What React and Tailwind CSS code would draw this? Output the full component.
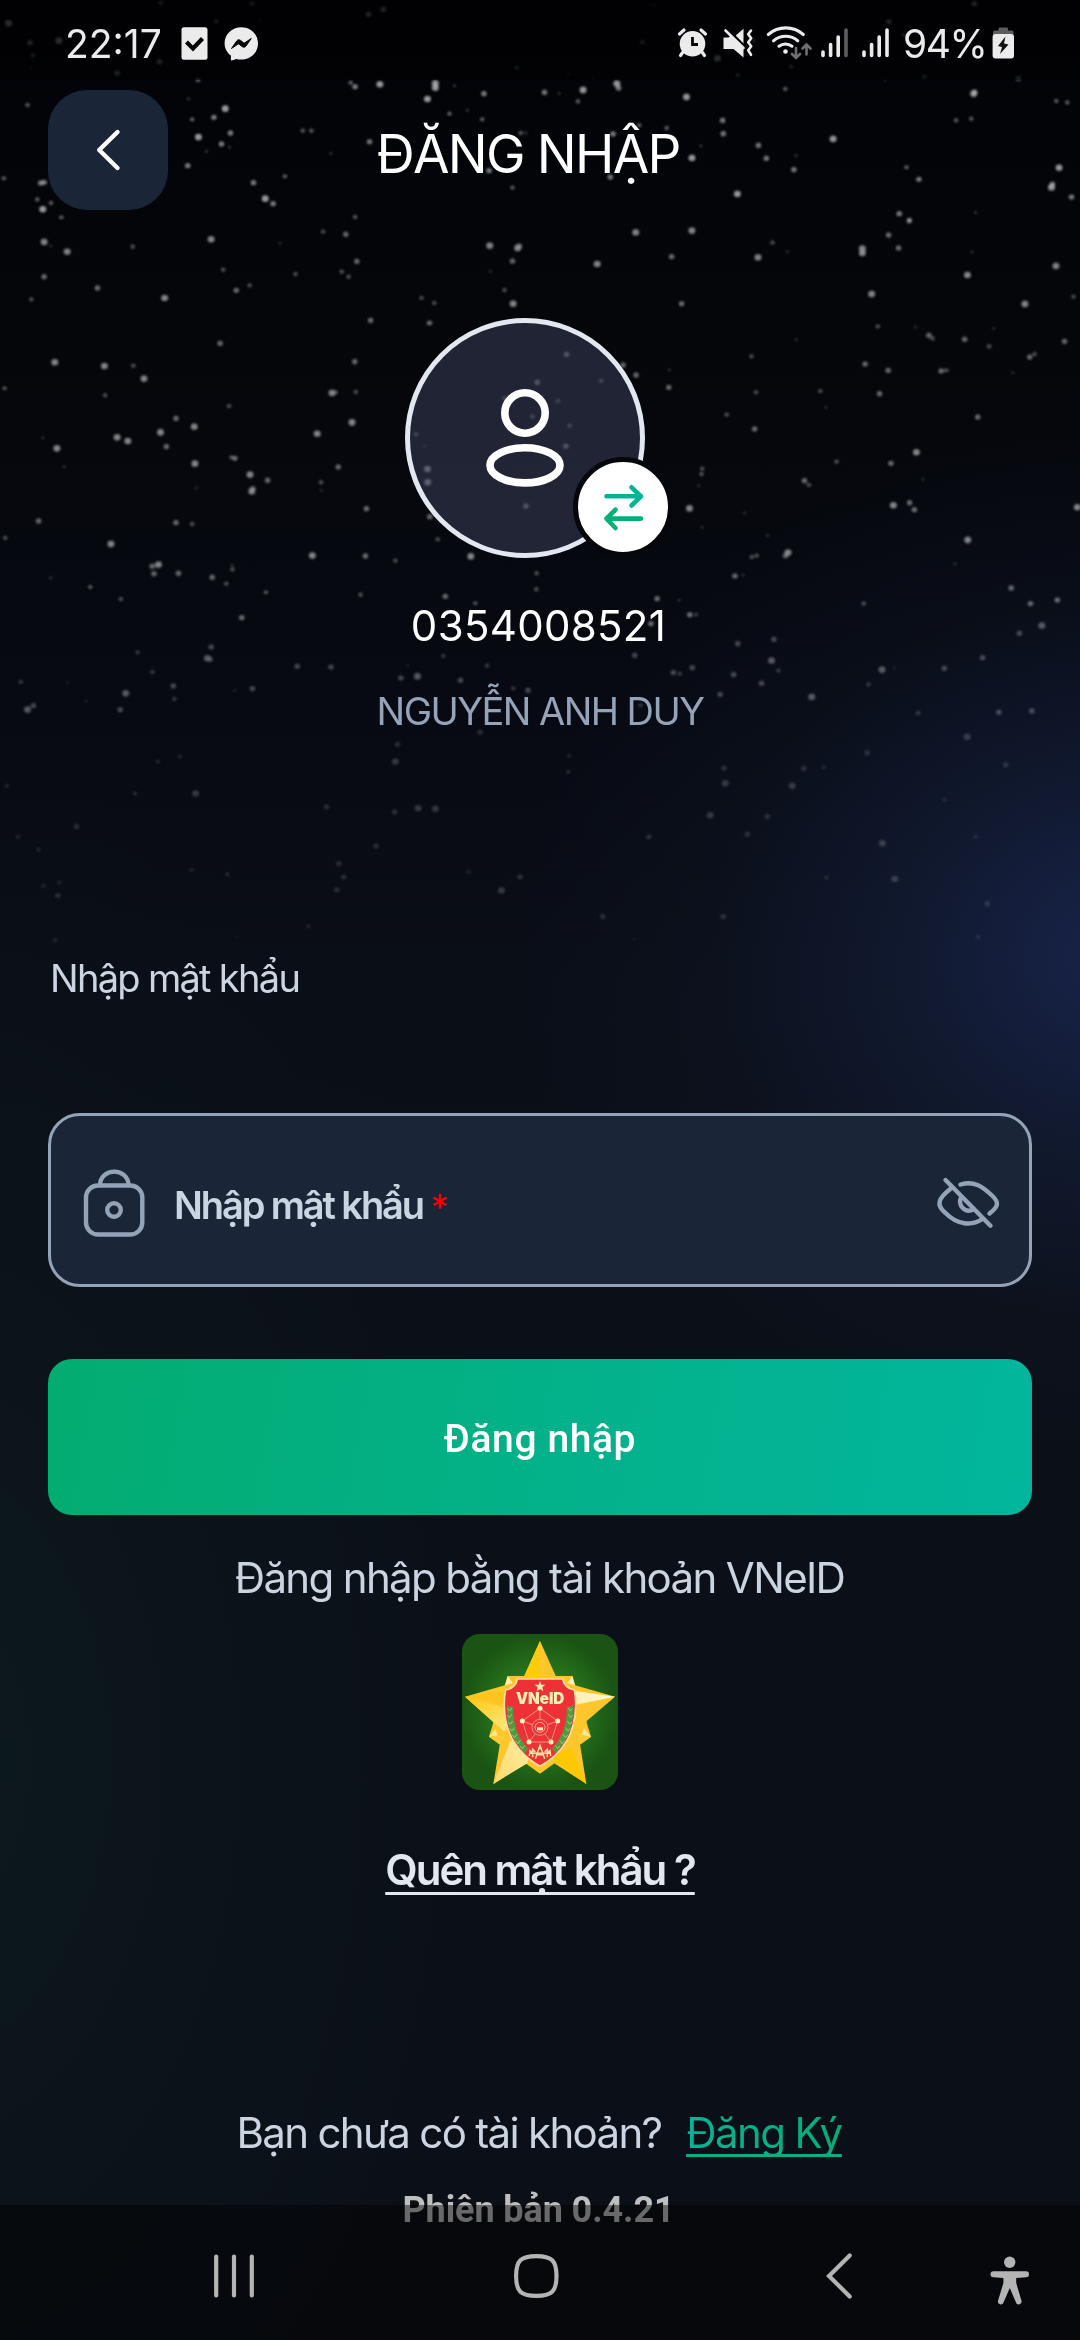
import React from "react";

/* Star clusters: each entry is [x, y, magnitude]; every cluster has its own origin in page pixels. */
const STAR_CLUSTERS = [
  {
    at: "translate(0 0) scale(0.3444 0.3333)",
    dim: 0.48,
    stars: [
      [25, 70, 4], [87, 128, 3], [96, 166, 2], [171, 122, 4], [340, 219, 3], [463, 185, 3], [467, 9, 2], [628, 64, 2], [732, 11, 2],
      [754, 62, 1], [1070, 43, 3], [1113, 28, 3], [1501, 203, 2], [298, 146, 1], [90, 203, 1],
      [1899, 16, 1], [1865, 126, 2], [2083, 175, 4], [2142, 226, 2], [2189, 122, 2], [2297, 200, 2], [2581, 65, 3], [2625, 105, 2],
      [2829, 11, 3], [2684, 231, 2], [2957, 236, 3], [1651, 223, 1], [1722, 232, 1], [2570, 241, 1],
    ],
  },
  {
    at: "translate(0 0) scale(0.3444 0.3333)",
    dim: 0.86,
    stars: [
      [80, 315, 2], [575, 241, 2], [1018, 248, 2], [1031, 260, 3], [1103, 253, 4], [1264, 250, 4], [1264, 263, 4], [1241, 297, 4],
      [1405, 281, 3], [1320, 257, 1], [1305, 341, 2], [1400, 358, 2], [1357, 331, 1], [654, 326, 4], [621, 352, 3], [558, 358, 2],
      [547, 296, 1], [576, 411, 4], [669, 399, 3], [643, 432, 3], [666, 442, 1], [599, 454, 1], [545, 497, 3], [879, 392, 2], [904, 392, 2],
      [961, 460, 1], [1073, 425, 3], [736, 548, 3], [827, 529, 2], [770, 596, 4], [793, 611, 3], [11, 535, 2], [118, 549, 3], [128, 547, 3],
      [108, 598, 2], [148, 609, 2], [124, 628, 4], [178, 652, 2], [1031, 651, 2], [1420, 512, 3], [1488, 563, 2], [1512, 399, 2], [1527, 399, 1],
      [1581, 277, 3], [1623, 280, 1], [1693, 270, 4], [1678, 304, 2], [1791, 251, 4], [1796, 264, 3], [1993, 291, 4], [2280, 267, 2],
      [2098, 361, 3], [2100, 401, 3], [1856, 376, 2], [1936, 384, 2], [1780, 402, 3], [2009, 474, 4], [2035, 438, 1], [2202, 436, 3],
      [2225, 475, 3], [2311, 467, 1], [2305, 509, 3], [2419, 417, 4], [2141, 582, 4], [1772, 531, 3], [2827, 281, 4], [2830, 276, 3],
      [3067, 303, 2], [3099, 307, 2], [2776, 361, 2], [2820, 356, 2], [2632, 502, 2], [2668, 538, 3], [3075, 503, 4], [3053, 562, 4],
      [3056, 552, 3], [3111, 591, 3], [2611, 641, 3], [2641, 660, 2], [2833, 637, 1],
    ],
  },
  {
    at: "translate(0 220) scale(0.3444 0.3333)",
    dim: 0.74,
    stars: [
      [128, 66, 4], [147, 78, 1], [195, 95, 4], [385, 80, 2], [613, 58, 4], [938, 35, 2], [1004, 43, 3], [813, 70, 1], [648, 149, 2],
      [128, 170, 3], [283, 204, 3], [91, 238, 2], [478, 234, 4], [686, 211, 3], [725, 196, 2], [858, 162, 2], [992, 155, 2], [1012, 170, 2],
      [1036, 124, 3], [1422, 77, 4], [1503, 84, 4], [1508, 78, 3], [1488, 123, 3], [1424, 154, 1], [1465, 210, 2], [1490, 251, 4],
      [1224, 234, 2], [1261, 249, 2], [1247, 309, 3], [1076, 301, 3], [639, 370, 3], [159, 427, 4], [303, 438, 4], [387, 437, 2],
      [418, 476, 4], [13, 505, 2], [305, 526, 2], [1030, 425, 3], [964, 519, 4], [975, 517, 2], [1033, 516, 2], [665, 558, 2],
      [1022, 607, 4], [921, 641, 4], [511, 595, 3], [564, 620, 4], [466, 637, 4], [483, 680, 3], [340, 652, 4], [371, 663, 4],
      [125, 653, 1], [165, 685, 4], [187, 740, 1], [566, 731, 4], [682, 715, 3], [672, 712, 2], [726, 764, 4], [777, 781, 3], [731, 814, 4],
      [734, 806, 3], [570, 804, 1], [982, 741, 3], [932, 787, 2], [933, 811, 1], [1064, 866, 3], [1241, 747, 4], [1242, 787, 4],
      [1208, 643, 2], [1232, 678, 1], [1248, 890, 3], [1527, 858, 3], [1271, 958, 2], [1560, 487, 3], [1465, 534, 2], [1546, 590, 2],
      [112, 903, 3], [15, 954, 2], [322, 972, 4], [511, 908, 3], [558, 912, 2], [460, 1034, 4], [442, 1039, 3], [447, 1061, 3],
      [518, 1060, 3], [616, 1072, 3], [675, 1048, 2], [674, 1035, 1], [657, 1091, 2], [147, 1073, 1], [262, 1101, 2], [351, 1137, 2],
      [907, 1007, 4], [1061, 1008, 3], [1148, 1022, 2], [1367, 1009, 4], [1047, 1124, 2], [772, 1117, 2], [702, 1193, 3], [1293, 1129, 3],
      [1380, 1150, 2], [1558, 1060, 2], [1557, 1108, 2],
    ],
  },
  {
    at: "translate(540 220) scale(0.3444 0.3333)",
    dim: 0.74,
    stars: [
      [278, 37, 4], [441, 32, 4], [166, 132, 4], [382, 110, 3], [411, 251, 3], [675, 68, 2], [633, 112, 4], [718, 95, 1], [936, 86, 4],
      [936, 99, 4], [1012, 45, 3], [1041, 84, 3], [1072, 2, 3], [1254, 95, 1], [1241, 165, 4], [1498, 138, 4], [963, 222, 4], [1408, 252, 4],
      [1549, 230, 2], [981, 319, 2], [1090, 321, 1], [1129, 346, 3], [1140, 355, 2], [1233, 358, 3], [1304, 379, 2], [1317, 325, 1],
      [1523, 364, 3], [744, 358, 1], [1422, 411, 3], [1436, 402, 2], [614, 409, 2], [944, 432, 3], [1011, 451, 3], [1165, 453, 3],
      [1180, 451, 2], [1373, 458, 1], [375, 449, 1], [374, 502, 3], [279, 465, 3], [241, 435, 3], [627, 517, 2], [542, 584, 2], [814, 513, 2],
      [830, 562, 1], [986, 521, 3], [1271, 591, 3], [623, 627, 3], [1093, 697, 4], [1019, 730, 3], [861, 725, 2], [471, 746, 2],
      [469, 762, 2], [461, 797, 1], [768, 782, 3], [781, 795, 2], [1112, 778, 1], [434, 865, 4], [1026, 856, 4], [1073, 848, 3],
      [1087, 869, 3], [1560, 862, 4], [471, 922, 1], [594, 879, 1], [661, 947, 1], [1242, 960, 4], [720, 998, 4], [713, 1007, 3],
      [615, 1011, 2], [629, 1007, 2], [1205, 1031, 1], [566, 1068, 3], [590, 1065, 1], [340, 1136, 3], [404, 1140, 1], [1368, 1104, 3],
      [1502, 1140, 3], [1424, 1151, 3], [940, 1151, 2], [435, 1184, 3], [322, 1211, 3], [77, 403, 3], [177, 482, 2], [52, 543, 2],
      [86, 617, 2], [75, 678, 3],
    ],
  },
  {
    at: "translate(0 220) scale(0.3444 0.3333)",
    dim: 0.48,
    stars: [
      [613, 1281, 3], [602, 1315, 4], [610, 1318, 3], [863, 1339, 3], [961, 1341, 3], [399, 1297, 2], [442, 1356, 2], [60, 1386, 2],
      [196, 1388, 1], [365, 1420, 4], [503, 1398, 3], [506, 1437, 2], [349, 1469, 3], [250, 1443, 1], [80, 1469, 4], [97, 1457, 3],
      [733, 1406, 3], [682, 1411, 1], [1164, 1374, 3], [1212, 1369, 4], [1287, 1308, 2], [1183, 1336, 1], [1337, 1381, 3], [1414, 1337, 2],
      [1533, 1411, 3], [1490, 1405, 2],
      [1843, 1306, 3], [2021, 1184, 2], [2142, 1271, 3], [2247, 1258, 3], [2240, 1322, 4], [2260, 1352, 2], [2130, 1364, 3], [2211, 1390, 3],
      [2091, 1423, 3], [1955, 1358, 3], [2010, 1343, 3], [1974, 1361, 2], [2357, 1431, 4], [2561, 1349, 4], [2597, 1344, 1], [2522, 1393, 2],
      [2742, 1345, 3], [2853, 1313, 3], [3025, 1217, 4], [2960, 1240, 3], [2666, 1479, 2], [2900, 1477, 3], [2996, 1473, 3], [1860, 1456, 2],
    ],
  },
  {
    at: "scale(0.6888 0.6378)",
    dim: 0.27,
    stars: [
      [574, 1194, 4], [577, 1167, 3], [697, 1148, 3], [825, 1210, 5], [826, 1185, 2], [196, 1244, 5], [284, 1244, 4], [229, 1194, 2],
      [261, 1186, 2], [474, 1265, 3], [607, 1267, 4], [632, 1268, 4], [573, 1273, 3], [111, 1296, 3], [26, 1312, 2], [10, 1232, 2],
      [546, 1326, 3], [492, 1354, 3], [499, 1375, 3], [489, 1395, 3], [56, 1332, 2], [63, 1389, 2], [84, 1404, 3], [86, 1384, 2],
      [330, 1371, 5], [278, 1364, 2], [680, 1367, 2], [728, 1396, 4], [755, 1375, 3], [942, 1312, 3], [1031, 1278, 4], [1114, 1280, 3],
      [1085, 1308, 3], [1053, 1228, 4], [1051, 1204, 3], [1150, 1232, 4], [1167, 1205, 3], [1196, 1203, 2], [1259, 1180, 3], [1404, 1155, 4],
      [1460, 1199, 3], [1281, 1322, 4], [1299, 1378, 4], [1371, 1254, 2], [1416, 1312, 2], [875, 1437, 3], [1050, 1437, 3], [1433, 1417, 3],
      [1200, 1376, 2], [921, 1472, 1], [448, 1452, 2], [344, 1469, 1], [80, 1474, 2], [1420, 1469, 2],
    ],
  },
];

const RADIUS = [0, 4.5, 6.5, 8, 10, 5.5];
const ALPHA = [0, 0.3, 0.5, 0.65, 0.82, 0.8];

function StarField() {
  return (
    <svg className="absolute inset-0 h-[1000px] w-[1080px]" viewBox="0 0 1080 1000">
      <defs>
        <filter id="soft" x="0" y="0" width="1" height="1">
          <feGaussianBlur stdDeviation="0.9" />
        </filter>
      </defs>
      <g filter="url(#soft)">
        <rect width="1080" height="1000" fill="none" />
        {STAR_CLUSTERS.map((cluster, c) => (
          <g key={c} transform={cluster.at} fill="#d3d5d8" opacity={cluster.dim}>
            {cluster.stars.map(([x, y, m], i) => (
              <circle key={i} cx={x} cy={y} r={c === 5 ? RADIUS[m] * 0.5 : RADIUS[m]} opacity={ALPHA[m]} />
            ))}
          </g>
        ))}
      </g>
    </svg>
  );
}

function StatusBar() {
  return (
    <div className="flex h-20 w-full items-start bg-black/50 text-[39px] leading-[47px] text-[#ebebeb]">
      <span className="ml-[65px] mt-[19.5px]">22:17</span>
      <svg className="ml-[17px] mt-[25px]" width="80" height="36" viewBox="179 25 80 36">
        <rect x="181.5" y="27.3" width="26" height="32.5" rx="2.5" fill="#ebebeb" />
        <path d="M186.5 42 L193 48.5 L202.5 38.5" fill="none" stroke="#050505" strokeWidth="4.2" />
        <path
          d="M241.3 27.2c9.4 0 16.7 7 16.7 16.2s-7.3 16.2-16.7 16.2c-1.8 0-3.5-.2-5-.7l-4.4 1.6c-.5.2-1-.1-1-.7v-4.3c-3.9-3-6.3-7.2-6.3-12.1 0-9.2 7.3-16.2 16.7-16.2z"
          fill="#ebebeb"
        />
        <path d="M231.5 48.5l5.2-7.5c1-1.4 2.5-1.6 3.8-.6l3 2.3c.5.4 1 .4 1.5 0l6.3-4.3-5.3 7.6c-1 1.4-2.5 1.6-3.8.6l-3-2.3c-.5-.4-1-.4-1.500 0z" fill="#050505" stroke="#050505" strokeWidth="1" />
      </svg>
      <svg className="ml-auto mt-[24px]" width="215" height="38" viewBox="675 24 215 38" fill="none" strokeLinecap="round">
        <g>
          <circle cx="691.5" cy="43.7" r="12.8" fill="#ebebeb" />
          <path d="M678.5 34l4.5-4M704.500 34l-4.500-4M682 52l-2.500 3.500M701 52l2.500 3.500" stroke="#ebebeb" strokeWidth="3.2" />
          <path d="M691.500 37v7.500h5.500" stroke="#050505" strokeWidth="2.8" strokeLinecap="butt" />
        </g>
        <path d="M722.500 37.500h5l2-1.500 13 12.500v9l-10-8.500h-10zM742.500 28.800v14.700l-7.800-8z" fill="#ebebeb" />
        <path d="M724.500 30.500l18 17.500" stroke="#ebebeb" strokeWidth="2.600" />
        <path d="M750 30.500l-2.800 3.800 3 4-3 4 3 4-3 4 2.800 4.500" stroke="#ebebeb" strokeWidth="2.600" strokeLinejoin="round" />
        <g stroke="#ebebeb" strokeWidth="3.100">
          <path d="M767.300 34.500a26.500 26.500 0 0 1 35 0M772.500 40.800a18.500 18.500 0 0 1 24.300 0M778 46.200a10.500 10.500 0 0 1 13 0" />
        </g>
        <circle cx="784.500" cy="51.500" r="2.300" fill="#ebebeb" />
        <path d="M795 48v10m-4-4l4 4 4-4M805.500 54.500v-10m-4 4l4-4 4 4" stroke="#6f6f6f" strokeWidth="2.600" />
        <g stroke="#ebebeb" strokeWidth="3.600">
          <path d="M822 52v3.500M829.600 44.500v11M837.200 37v18.500" />
          <path d="M845 30v25.500" stroke="#5d5d5d" />
          <path d="M863 52v3.500M870.600 44.500v11M878.200 37v18.500M886 30v25.500" />
        </g>
      </svg>
      <span className="ml-[12px] mt-[19.5px] w-[88px] tracking-[-1.4px]">94%</span>
      <svg className="mr-[64px] mt-[26px] shrink-0" width="25" height="34" viewBox="991 26 25 34">
        <path d="M993 38v-5.500c0-1.500 1-2 2-2h3.500v-1.500c0-1 .5-1.500 1.500-1.500h6.500c1 0 1.500.5 1.500 1.500v1.500h3.500c1 0 2 .5 2 2v5.500z" fill="#5d5d5d" />
        <rect x="992.600" y="34" width="21.400" height="24.500" rx="3" fill="#ebebeb" />
        <path d="M1005.500 36.500l-7.500 9.500 4 1-2 7 8.500-9.500-4.500-1z" fill="#111" />
      </svg>
    </div>
  );
}

function VneidLogo() {
  const wheatL = [[209, 300], [208, 320], [211, 340], [216, 360], [224, 380], [234, 398], [247, 413]];
  return (
    <svg className="h-[156px] w-[156px] rounded-[18px]" viewBox="66 72 468 468">
      <defs>
        <radialGradient id="field">
          <stop offset="0" stopColor="#38962c" />
          <stop offset="0.55" stopColor="#27731d" />
          <stop offset="1" stopColor="#1a5313" />
        </radialGradient>
        <linearGradient id="pale" x1="0" y1="0" x2="1" y2="1">
          <stop offset="0" stopColor="#fec810" />
          <stop offset="1" stopColor="#fff0a0" />
        </linearGradient>
        <linearGradient id="gleam" x1="1" y1="0" x2="0" y2="0.6">
          <stop offset="0" stopColor="#fffbe0" />
          <stop offset="1" stopColor="#fdeb9a" />
        </linearGradient>
        <linearGradient id="foot" x1="0" y1="1" x2="1" y2="0">
          <stop offset="0" stopColor="#fdd96a" />
          <stop offset="1" stopColor="#fff3b8" />
        </linearGradient>
      </defs>
      <rect x="66" y="72" width="468" height="468" fill="url(#field)" />
      <path d="M203 198H397L453 380L300 491L147 380Z" fill="#fdc62a" />
      <path d="M203 198L240 250L190 245ZM397 198L360 250L410 245Z" fill="#fff0b4" />
      <path d="M147 380L170 352L200 372ZM453 380L430 352L410 372Z" fill="#fee896" />
      <path d="M300 93L353 211L525 260L440 333L418 390L439 522L300 432L160 522L180 400L159 335L75 260L247 211Z" fill="#fdc72c" />
      <path d="M300 93V300L247 211Z" fill="#fecb0c" />
      <path d="M75 260L190 245L300 300Z" fill="#fdc51c" />
      <path d="M75 260L300 320L190 362L159 335Z" fill="url(#pale)" />
      <path d="M525 260L400 242L350 296Z" fill="url(#gleam)" />
      <path d="M160 522L210 395L300 330L262 460Z" fill="url(#foot)" />
      <path d="M439 522L395 415L330 440Z" fill="#fdc800" />
      <path d="M147 380L200 372L178 402ZM453 380L410 372L422 402Z" fill="#fccb36" />
      <path
        d="M232 207H368Q372 233 403 240Q408 262 407 290Q404 410 300 469Q196 410 193 290Q192 262 197 240Q228 233 232 207Z"
        fill="#ed3237"
        stroke="#fddf9c"
        strokeWidth="5"
      />
      <path d="M300 213l4 11h12l-9 8 3 12-10-7-10 7 3-12-9-8h12z" fill="#fde9a8" />
      <text x="228" y="282" textLength="145" lengthAdjust="spacingAndGlyphs" className="font-black" fontFamily="Inter, sans-serif" fontSize="46" fill="#fdf0b0">
        VNeID
      </text>
      <g fill="none" stroke="#f8a287" strokeWidth="2.500">
        <path d="M300 295L353 333L333 396H267L247 333Z" />
        <circle cx="300" cy="352" r="24" />
        <path d="M300 295V328M247 333L277 344M353 333L323 344M267 396L285 372M333 396L315 372" />
        <circle cx="300" cy="352" r="15" stroke="#fbc79a" />
      </g>
      <g fill="#fdf3c0">
        <circle cx="300" cy="295" r="7.500" />
        <circle cx="353" cy="333" r="7.500" />
        <circle cx="333" cy="396" r="7.500" />
        <circle cx="267" cy="396" r="7.500" />
        <circle cx="247" cy="333" r="7.500" />
        <rect x="291" y="352" width="18" height="9" />
      </g>
      <path d="M201 286Q198 350 222 388Q238 414 254 430L264 416Q220 372 219 292ZM399 286Q402 350 378 388Q362 414 346 430L336 416Q380 372 381 292Z" fill="#519a44" />
      <g fill="none" stroke="#c6d87a" strokeWidth="2.200">
        {wheatL.map(([x, y], i) => (
          <path key={i} d={`M${x - 7} ${y - 5}L${x} ${y + 3}L${x + 7} ${y - 7}M${600 - x - 7} ${y - 7}L${600 - x} ${y + 3}L${600 - x + 7} ${y - 5}`} />
        ))}
      </g>
      <path d="M268 438l2-16 8 6M332 438l-2-16-8 6M278 442v-24l8 8M322 442v-24l-8 8M286 446l14-40 14 40M290 434h20M268 430h64M294 416h12" fill="none" stroke="#fde0a0" strokeWidth="4.500" />
    </svg>
  );
}

function Avatar() {
  return (
    <div className="relative mt-[108px] ml-[405px] size-[240px]">
      <div className="size-full rounded-full border-[5px] border-[#e2e8f0] bg-[#3e425e]/50">
        <svg className="size-full" viewBox="410 323 230 230" fill="none" stroke="#fff" strokeWidth="7.600">
          <circle cx="525" cy="413" r="20.200" />
          <ellipse cx="525" cy="465.300" rx="35" ry="17.600" />
        </svg>
      </div>
      <button className="absolute left-[168px] top-[139px] flex size-[100px] items-center justify-center rounded-full border-[5px] border-[#05070c] bg-white">
        <svg className="size-[90px] shrink-0" viewBox="578 462 90 90" fill="none" strokeWidth="4.600" strokeLinecap="round" strokeLinejoin="round">
          <path d="M606.500 496.300H641M631.500 487.300L641 496.300L631.500 505.500" stroke="#02b493" />
          <path d="M641 518.600H606.500M615.500 509.600L606.500 518.600L615.500 528" stroke="#03b078" />
        </svg>
      </button>
    </div>
  );
}

function NavBar() {
  return (
    <nav className="absolute bottom-0 left-0 flex h-[135px] w-full items-start bg-black/45 pt-[45px] text-[#b4b4b5]">
      <svg className="ml-[210px]" width="48" height="52" viewBox="210 2250 48 52" stroke="currentColor" strokeWidth="4.200" strokeLinecap="round">
        <path d="M216.200 2256.500v39M234 2256.500v39M251.800 2256.500v39" />
      </svg>
      <svg className="ml-[252px]" width="52" height="52" viewBox="510 2250 52 52" fill="none" stroke="currentColor" strokeWidth="4.200">
        <path d="M536.300 2256.100c15.500 0 20.200 4.500 20.200 19.900s-4.700 19.900-20.200 19.900-20.200-4.500-20.200-19.900 4.700-19.900 20.200-19.900z" />
      </svg>
      <svg className="ml-[260px]" width="34" height="52" viewBox="822 2250 34 52" fill="none" stroke="currentColor" strokeWidth="4.200" strokeLinecap="round">
        <path d="M849.700 2255.500L829 2276L849.700 2296.500" />
      </svg>
      <svg className="ml-[130px]" width="48" height="56" viewBox="986 2250 48 56" fill="currentColor">
        <circle cx="1009.700" cy="2262.200" r="5.700" />
        <path d="M993.500 2271.300h32.500a3 3 0 0 1 0 6l-9.800.7v5l5.200 17.600a2.800 2.800 0 0 1-5.400 1.800l-6.200-14.400-6.300 14.400a2.800 2.800 0 0 1-5.400-1.800l5.300-17.600v-5l-9.900-.7a3 3 0 0 1 0-6z" />
      </svg>
    </nav>
  );
}

export default function App() {
  return (
    <div className="relative flex h-[2340px] w-[1080px] flex-col overflow-hidden bg-[radial-gradient(ellipse_600px_530px_at_1120px_955px,#18234a_0%,#151f3ca8_35%,#111a2e40_68%,#0d142000_100%),radial-gradient(ellipse_640px_1000px_at_-80px_1760px,#0c1a1d_0%,#0c171b90_45%,#0b101700_100%),linear-gradient(180deg,#020308_0%,#04060a_14%,#070a12_30%,#0a0e17_42%,#0b0f17_52%,#0b0f17_100%)] font-[Inter,sans-serif] text-white">
      <StarField />
      <div className="relative flex flex-1 flex-col">
        <StatusBar />

        <header className="mt-[10px] flex h-[120px] pl-12">
          <button className="flex size-[120px] shrink-0 items-center justify-center rounded-[39px] bg-[#1a2638]">
            <svg width="60" height="60" viewBox="78 120 60 60" fill="none" stroke="#fff" strokeWidth="4.400" strokeLinecap="round" strokeLinejoin="round">
              <path d="M117.500 132L99.200 150L117.500 168" />
            </svg>
          </button>
          <h1 className="flex-1 pt-[8px] pr-[192px] text-center text-[53px] leading-[113px] font-normal tracking-[-1.75px]">ĐĂNG NHẬP</h1>
        </header>

        <Avatar />

        <p className="mt-[38px] h-[60px] pr-[3px] text-center text-[42px] leading-[60px] tracking-[0.3px]">0354008521</p>
        <p className="mt-[25px] h-[60px] text-center text-[38px] leading-[60px] tracking-[-1.55px] text-[#94a3b8]">NGUYỄN ANH DUY</p>

        <p className="mt-[207px] h-[60px] pl-[50px] text-[38px] leading-[60px] tracking-[-1.7px] text-[#cbd5e1]">Nhập mật khẩu</p>

        <div className="mx-12 mt-[105px] flex h-[174px] items-center rounded-[32px] border-[3px] border-[#94a3b8] bg-[#1a2638]">
          <svg className="ml-[28px]" width="70" height="76" viewBox="79 1162 70 76" fill="none" stroke="#94a3b8" strokeWidth="4.400">
            <rect x="86" y="1185.500" width="56.300" height="49" rx="12" />
            <path d="M100 1185.500c0-18.500 28.500-18.500 28.500 0" />
            <circle cx="114" cy="1210" r="6.800" />
          </svg>
          <span className="ml-[25px] w-[247px] pt-[9px] text-[38px] leading-[60px] font-semibold tracking-[-2.1px] whitespace-nowrap text-[#cbd5e1]">Nhập mật khẩu</span>
          <span className="ml-[10px] pt-[13px] text-[36px] leading-[60px] text-[#ff0000]">*</span>
          <svg className="mt-[6px] mr-[27px] ml-auto" width="70" height="60" viewBox="932 1173 70 60" fill="none" stroke="#94a3b8" strokeWidth="4.400" strokeLinecap="round">
            <path d="M945.500 1180L990.500 1225.700" />
            <path d="M951.500 1188C937 1199 936.500 1205.500 945 1212.500C957.500 1225.500 972 1226 982.500 1219" />
            <path d="M960.500 1184.500C974 1180.500 982 1186 992.500 1196C1000 1203 997.500 1207 989.500 1213.500" />
            <path d="M961 1197.500C957.500 1205.500 965 1213.500 973.500 1209.500" />
          </svg>
        </div>

        <button className="mx-12 mt-[72px] h-[156px] shrink-0 rounded-[24px] bg-[linear-gradient(100deg,#03ac70_0%,#03b28c_55%,#02b69d_100%)] pt-[4px] font-[Roboto,sans-serif] text-[39px] font-medium tracking-[0.6px]">
          Đăng nhập
        </button>

        <p className="mt-[33px] h-[60px] pr-[1px] text-center text-[42px] leading-[60px] tracking-[-1.65px] text-[#cbd5e1]">Đăng nhập bằng tài khoản VNeID</p>
        <div className="mt-[26px] flex h-[156px] justify-center">
          <VneidLogo />
        </div>
        <a className="mt-[50px] h-[60px] text-center text-[42px] leading-[60px] font-semibold tracking-[-2px] text-[#e2e8f0] underline decoration-[3px] underline-offset-[7px] [text-decoration-skip-ink:none]">
          Quên mật khẩu ?
        </a>

        <div className="mt-[203px] flex h-[60px] pl-[236.5px] text-[42px] leading-[60px]">
          <span className="tracking-[-1.68px] text-[#cbd5e1]">Bạn chưa có tài khoản?</span>
          <a className="ml-[25px] h-[60px] self-start bg-[linear-gradient(90deg,#02b496,#03ad74)] bg-clip-text tracking-[-1.600px] text-transparent underline decoration-[#03b183] decoration-[3px] underline-offset-[6px] [text-decoration-skip-ink:none]">
            Đăng Ký
          </a>
        </div>
        <p className="mt-[24px] h-[46px] pr-[3px] text-center font-[Roboto,sans-serif] text-[36px] leading-[46px] font-bold tracking-[-0.1px] text-[#bfbfbf]">Phiên bản 0.4.21</p>
      </div>
      <NavBar />
    </div>
  );
}
